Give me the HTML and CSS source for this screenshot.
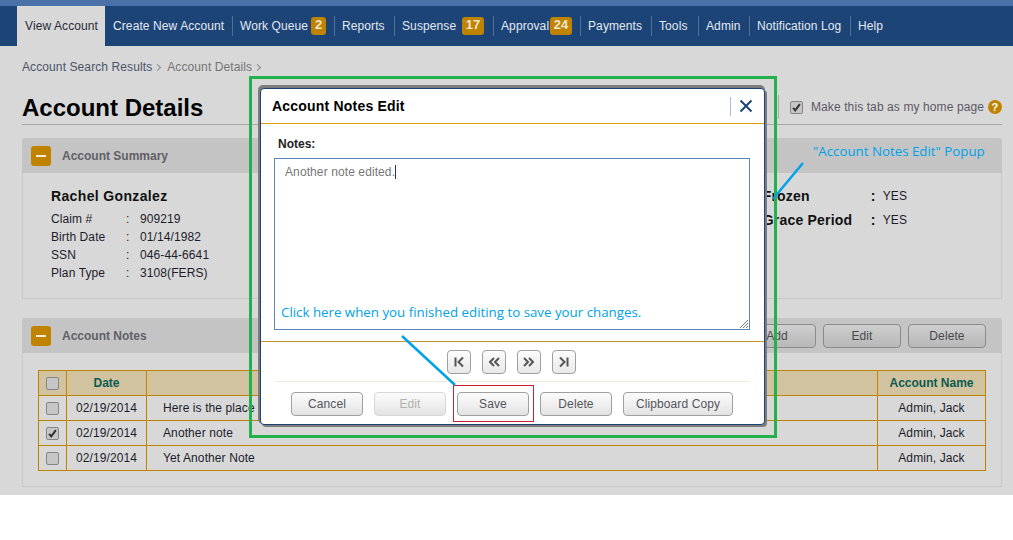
FILE: index.html
```html
<!DOCTYPE html>
<html>
<head>
	<title>Account Details</title>
	<link rel="stylesheet" href="styles.css">
</head>
<body>
<div class="page">
	<div class="top-strip"></div>
	<ul class="nav">
		<li class="active">View Account</li>
		<li class="create">Create New Account</li>
		<li class="queue">Work Queue <span class="badge">2</span></li>
		<li class="reports">Reports</li>
		<li class="suspense">Suspense <span class="badge">17</span></li>
		<li class="approval">Approval <span class="badge">24</span></li>
		<li class="payments">Payments</li>
		<li class="tools">Tools</li>
		<li class="admin">Admin</li>
		<li class="log">Notification Log</li>
		<li class="last">Help</li>
	</ul>

	<div class="main">
		<div class="breadcrumb">
			<a>Account Search Results</a><span class="sep"></span><span class="here">Account Details</span><span class="sep"></span>
		</div>

		<div class="title-row">
			<h1>Account Details</h1>
			<div class="home-tab">
				<span class="check checked"><svg viewBox="0 0 13 13"><path d="M2.5 7l2.5 3 5.5-7.5" /></svg></span>
				<span>Make this tab as my home page</span>
				<span class="help">?</span>
			</div>
		</div>

		<div class="panel summary">
			<div class="panel-head">
				<span class="toggle"></span>
				<span class="panel-title">Account Summary</span>
			</div>
			<div class="summary-body">
				<div class="person">
					<div class="person-name">Rachel Gonzalez</div>
					<div class="info"><span>Claim #</span><span>:</span><span>909219</span></div>
					<div class="info"><span>Birth Date</span><span>:</span><span>01/14/1982</span></div>
					<div class="info"><span>SSN</span><span>:</span><span>046-44-6641</span></div>
					<div class="info"><span>Plan Type</span><span>:</span><span>3108(FERS)</span></div>
				</div>
				<div class="flags">
					<div class="flag"><b>Frozen</b><b>:</b><span>YES</span></div>
					<div class="flag"><b>Grace Period</b><b>:</b><span>YES</span></div>
				</div>
			</div>
		</div>

		<div class="panel notes">
			<div class="panel-head">
				<span class="toggle"></span>
				<span class="panel-title">Account Notes</span>
				<div class="panel-btns">
					<button class="btn">Add</button>
					<button class="btn">Edit</button>
					<button class="btn">Delete</button>
				</div>
			</div>
			<table class="notes-table">
				<tr>
					<th class="c-check"><span class="check"></span></th>
					<th class="c-date">Date</th>
					<th></th>
					<th class="c-name">Account Name</th>
				</tr>
				<tr>
					<td class="c-check"><span class="check"></span></td>
					<td class="c-date">02/19/2014</td>
					<td class="c-note">Here is the place</td>
					<td class="c-name">Admin, Jack</td>
				</tr>
				<tr>
					<td class="c-check"><span class="check checked"><svg viewBox="0 0 13 13"><path d="M2.5 7l2.5 3 5.5-7.5" /></svg></span></td>
					<td class="c-date">02/19/2014</td>
					<td class="c-note">Another note</td>
					<td class="c-name">Admin, Jack</td>
				</tr>
				<tr>
					<td class="c-check"><span class="check"></span></td>
					<td class="c-date">02/19/2014</td>
					<td class="c-note">Yet Another Note</td>
					<td class="c-name">Admin, Jack</td>
				</tr>
			</table>
		</div>
	</div>

	<!-- popup -->
	<div class="modal">
		<div class="modal-head">
			<span class="modal-title">Account Notes Edit</span>
			<span class="modal-close"><svg viewBox="0 0 14 14"><path d="M1.5 1.5l11 11M12.5 1.5l-11 11" /></svg></span>
		</div>
		<div class="modal-body">
			<div class="notes-label">Notes:</div>
			<div class="note-box">
				<span class="note-text">Another note edited.</span><span class="caret"></span>
				<svg class="grip" viewBox="0 0 8 8"><path d="M0 8l8-8M3 8l5-5M6 8l2-2" /></svg>
			</div>
		</div>
		<div class="pager">
			<button class="btn-small"><svg viewBox="0 0 14 14"><path d="M3.5 2.5v9M11 2.5L6.5 7l4.500 4.500" /></svg></button>
			<button class="btn-small"><svg viewBox="0 0 14 14"><path d="M7 3L3 7l4 4M12 3L8 7l4 4" /></svg></button>
			<button class="btn-small"><svg viewBox="0 0 14 14"><path d="M2 3l4 4-4 4M7 3l4 4-4 4" /></svg></button>
			<button class="btn-small"><svg viewBox="0 0 14 14"><path d="M10.500 2.500v9M3 2.500L7.500 7 3 11.500" /></svg></button>
		</div>
		<div class="modal-btns">
			<button class="btn white">Cancel</button>
			<button class="btn white off">Edit</button>
			<button class="btn white">Save</button>
			<button class="btn white">Delete</button>
			<button class="btn white wide">Clipboard Copy</button>
		</div>
	</div>

	<!-- annotations drawn on top of the screenshot -->
	<div class="green-box"></div>
	<div class="save-box"></div>
	<div class="callout popup-note">"Account Notes Edit" Popup</div>
	<div class="callout click-note">Click here when you finished editing to save your changes.</div>
	<svg class="arrows" viewBox="0 0 1013 540">
		<path d="M803 163L773 199M402 336L455 385" />
	</svg>
</div>
</body>
</html>
```

FILE: styles.css
```css
* {
  box-sizing: border-box;
}

body {
  margin: 0;
  background-color: #fff;
  font-family: "Liberation Sans", Arial, sans-serif;
  font-size: 12px;
  letter-spacing: 0.1px;
  color: #1c1c2c;
  height: 540px;
  overflow: hidden;
}

.page {
  position: relative;
  height: 495px;
  background-color: #d8d8d8;
}

.top-strip {
  height: 6px;
  background-color: #4a72a8;
}

/* nav */
.nav {
  display: flex;
  align-items: center;
  height: 40px;
  margin: 0;
  padding: 0 0 0 17px;
  list-style: none;
  background-color: #1c4477;
  color: #e4e9f0;
}

.nav li {
  display: flex;
  align-items: center;
  justify-content: space-between;
  height: 20px;
  padding: 0 7px 0 7px;
  border-right: 1px solid #4f7099;
  white-space: nowrap;
}

.nav li.active {
  height: 40px;
  width: 88px;
  padding-left: 8px;
  background-color: #d8d8d8;
  color: #2a2a3a;
  border-right: 0;
}

.nav li.create { width: 128px; padding-left: 8px; }
.nav li.queue { width: 102px; padding-right: 8px; }
.nav li.reports { width: 60px; }
.nav li.suspense { width: 99px; padding-right: 9px; }
.nav li.approval { width: 87px; padding-right: 8px; }
.nav li.payments { width: 71px; }
.nav li.tools { width: 47px; }
.nav li.admin { width: 51px; }
.nav li.log { width: 101px; }

.nav li.last {
  border-right: 0;
}

.badge {
  display: inline-block;
  height: 18px;
  min-width: 15px;
  padding: 0 3.75px;
  border-radius: 3px;
  background-color: #bf8300;
  color: #f0e6d0;
  font-size: 13px;
  font-weight: bold;
  letter-spacing: 0;
  line-height: 16px;
  text-align: center;
}

/* page content */
.main {
  padding: 14px 11px 0 22px;
}

.breadcrumb {
  display: flex;
  align-items: center;
  height: 14px;
  color: #4a5468;
}

.breadcrumb .here {
  color: #757575;
}

.breadcrumb .sep {
  width: 5px;
  height: 5px;
  margin: 0 7px 0 3px;
  border-top: 1px solid #888;
  border-right: 1px solid #888;
  transform: rotate(45deg);
}

.title-row {
  display: flex;
  align-items: center;
  justify-content: space-between;
  height: 51px;
  padding-top: 18px;
  border-bottom: 1px solid #aaa;
  margin-bottom: 13px;
}

h1 {
  margin: 0;
  font-size: 24px;
  font-weight: bold;
  letter-spacing: 0;
  color: #000;
}

.home-tab {
  display: flex;
  align-items: center;
  height: 24px;
  padding-left: 11px;
  border-left: 1px solid #aaa;
  color: #5c5866;
  margin-bottom: 2px;
}

.home-tab .check {
  margin-right: 8px;
}

.help {
  width: 14px;
  height: 14px;
  margin-left: 4px;
  border-radius: 50%;
  background-color: #bf8300;
  color: #fff;
  font-size: 11px;
  font-weight: bold;
  line-height: 14px;
  text-align: center;
}

.check {
  display: inline-block;
  width: 13px;
  height: 13px;
  border: 1px solid #858585;
  border-radius: 2px;
  background-color: #c6c6c6;
  vertical-align: middle;
}

.check svg {
  display: block;
  width: 11px;
  height: 11px;
  fill: none;
  stroke: #333;
  stroke-width: 2.4;
}

/* panels */
.panel {
  border: 1px solid #c8c8c8;
  border-top: 0;
  border-radius: 3px 3px 0 0;
  margin-right: 0;
}

.summary {
  height: 161px;
  margin-bottom: 19px;
}

.notes {
  height: 169px;
}

.panel-head {
  display: flex;
  align-items: center;
  height: 35px;
  margin: 0 -1px;
  padding-left: 9px;
  background-color: #c4c4c4;
  border-radius: 3px 3px 0 0;
}

.toggle {
  position: relative;
  width: 20px;
  height: 20px;
  border-radius: 3px;
  background-color: #bf8300;
}

.toggle::after {
  content: "";
  position: absolute;
  left: 5px;
  top: 9px;
  width: 10px;
  height: 2px;
  background-color: #f4ecd8;
}

.panel-title {
  margin-left: 11px;
  font-weight: bold;
  letter-spacing: 0;
  color: #606068;
}

.panel-btns {
  display: flex;
  gap: 7px;
  margin-left: auto;
  margin-right: 16px;
}

.btn {
  width: 78px;
  height: 24px;
  padding: 0;
  border: 1px solid #8a8a8a;
  border-radius: 4px;
  background: linear-gradient(#cfcfcf, #c2c2c2 50%, #b9b9b9);
  color: #48484f;
  font-family: "Liberation Sans", Arial, sans-serif;
  font-size: 12px;
  letter-spacing: 0.1px;
}

.summary-body {
  display: flex;
  justify-content: space-between;
  padding: 15px 0 0 28px;
}

.person-name {
  margin-bottom: 6px;
  font-size: 14px;
  font-weight: bold;
  letter-spacing: 0.35px;
  color: #111;
}

.info {
  display: grid;
  grid-template-columns: 75px 14px auto;
  height: 18px;
  line-height: 18px;
}

.flags {
  margin-right: 94px;
}

.flag {
  display: grid;
  grid-template-columns: 108px 12px auto;
  height: 24px;
  line-height: 16px;
}

.flag b {
  font-size: 14px;
  letter-spacing: 0.2px;
  color: #111;
}

/* notes table */
.notes-table {
  width: 948px;
  margin: 17px 0 0 15px;
  border-collapse: collapse;
  table-layout: fixed;
}

.notes-table th,
.notes-table td {
  height: 25px;
  padding: 0;
  border: 1px solid #bf8300;
}

.notes-table th {
  background-color: #d1c3a0;
  color: #0d5a50;
  font-size: 12px;
  letter-spacing: 0;
}

.c-check {
  width: 28px;
  text-align: center;
}

.c-date {
  width: 80px;
  text-align: center;
}

.c-name {
  width: 108px;
  text-align: center;
}

.notes-table td.c-note {
  padding-left: 16px;
}

/* popup */
.modal {
  position: absolute;
  left: 260px;
  top: 88px;
  width: 505px;
  height: 337px;
  border: 1px solid #1c4477;
  border-radius: 4px;
  background-color: #fff;
  box-shadow: -1px -2px 0 1px #7c7c7c, 2px 2px 0 0 #7c7c7c;
}

.modal-head {
  display: flex;
  align-items: center;
  justify-content: space-between;
  height: 35px;
  padding-left: 11px;
  border-bottom: 1px solid #dc9a14;
}

.modal-title {
  font-size: 14px;
  font-weight: bold;
  letter-spacing: 0.2px;
  color: #000;
}

.modal-close {
  display: flex;
  align-items: center;
  width: 34px;
  height: 19px;
  padding-left: 8px;
  border-left: 1px solid #a8bed8;
}

.modal-close svg {
  width: 14px;
  height: 14px;
  fill: none;
  stroke: #1c4477;
  stroke-width: 2;
}

.modal-body {
  height: 218px;
  padding: 13px 13px 0;
  border-bottom: 1px solid #c8952c;
}

.notes-label {
  height: 21px;
  padding-left: 4px;
  font-weight: bold;
  letter-spacing: 0;
  color: #222;
}

.note-box {
  position: relative;
  width: 476px;
  height: 172px;
  padding: 6px 10px;
  border: 1px solid #5a84bc;
  color: #777;
  line-height: 14px;
}

.caret {
  display: inline-block;
  width: 1px;
  height: 14px;
  background-color: #333;
  vertical-align: top;
}

.grip {
  position: absolute;
  right: 1px;
  bottom: 1px;
  width: 8px;
  height: 8px;
  fill: none;
  stroke: #777;
  stroke-width: 1;
}

.pager {
  display: flex;
  gap: 11px;
  height: 40px;
  padding: 8px 0 0 172px;
  margin: 0 14px;
  border-bottom: 1px solid #f3ecd8;
}

.btn-small {
  display: flex;
  align-items: center;
  justify-content: center;
  width: 24px;
  height: 24px;
  padding: 0;
  border: 1px solid #a0a0a0;
  border-radius: 4px;
  background: linear-gradient(#fdfdfd, #e8e8e8);
}

.btn-small svg {
  width: 14px;
  height: 14px;
  fill: none;
  stroke: #555;
  stroke-width: 2;
}

.modal-btns {
  display: flex;
  gap: 11px;
  padding: 10px 0 0 30px;
}

.btn.white {
  width: 72px;
  border-color: #a0a0a0;
  background: linear-gradient(#fbfbfb, #f0f0f0 50%, #e2e2e2);
  color: #55555c;
}

.btn.white.off {
  border-color: #d8d8d8;
  color: #b0b0b0;
}

.btn.white.wide {
  width: 110px;
}

/* annotations */
.green-box {
  position: absolute;
  left: 249px;
  top: 76px;
  width: 528px;
  height: 362px;
  border: 3px solid #22b14c;
}

.save-box {
  position: absolute;
  left: 453px;
  top: 385px;
  width: 81px;
  height: 37px;
  border: 1px solid #c8202c;
}

.callout {
  position: absolute;
  color: #00a2e8;
  font-family: "Open Sans", sans-serif;
  font-size: 13.3px;
  letter-spacing: 0;
  line-height: 18px;
  white-space: nowrap;
}

.popup-note {
  left: 813px;
  top: 142px;
}

.click-note {
  left: 281px;
  top: 303px;
}

.arrows {
  position: absolute;
  left: 0;
  top: 0;
  width: 1013px;
  height: 540px;
  fill: none;
  stroke: #00a2e8;
  stroke-width: 2.5;
}
```
